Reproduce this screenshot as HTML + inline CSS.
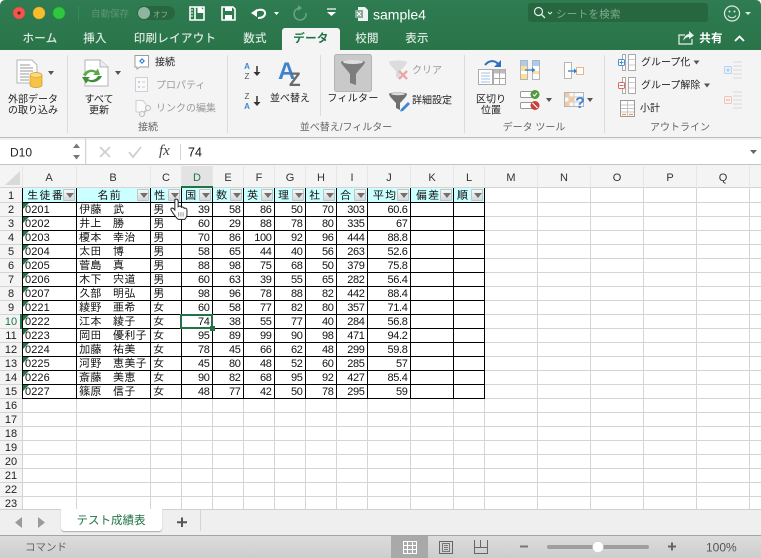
<!DOCTYPE html>
<html lang="ja"><head><meta charset="utf-8"><title>sample4</title>
<style>
html,body{margin:0;padding:0;background:#fff}
#w{position:relative;width:761px;height:558px;overflow:hidden;background:#fff;font-family:"Liberation Sans","Noto Sans CJK JP",sans-serif}
.a{position:absolute}
.t{position:absolute;white-space:nowrap;line-height:1;transform:translateY(calc(-50% + 1.5px));color:#222;font-size:10px}
.c{position:absolute;white-space:nowrap;line-height:1;transform:translate(-50%,calc(-50% + 1.5px));color:#222;font-size:10px}
.tab{color:#d9e8df;font-size:11.5px;font-weight:500;letter-spacing:.3px}
.g{color:#9a9a9a}
.lb{color:#666;font-size:10px}
table{position:absolute;left:22px;top:188px;border-collapse:separate;border-spacing:0;table-layout:fixed;width:463px;font-family:"IPAGothic","Noto Sans CJK JP",sans-serif;font-size:11.3px;color:#111}
td{box-sizing:border-box;height:14px;padding:1px 2px 0;border-right:1px solid #000;border-bottom:1px solid #000;line-height:12px;overflow:hidden;white-space:nowrap;background:#fff}
td.r{text-align:right;padding-right:2.5px;font-family:"Liberation Sans",sans-serif;font-size:11px;letter-spacing:-.35px}
tr td:first-child{border-left:1px solid #000}
tr.h td{height:15px;background:#ccffff;position:relative;padding:1px 0 0 3px;letter-spacing:1px}
tr.h td.m{text-align:center;padding-right:11px}
tr.h td:after{content:"";position:absolute;right:1px;top:1px;width:10px;height:10px;background:linear-gradient(#f6f6f6,#d8d8d8);border:1px solid #c4c4c4;border-radius:1px}
tr.h td:before{content:"";position:absolute;right:2.5px;top:5px;width:0;height:0;border-left:4px solid transparent;border-right:4px solid transparent;border-top:5px solid #707070;z-index:2}
td.f{position:relative;font-family:"Liberation Sans",sans-serif;font-size:11px;letter-spacing:.1px;padding-left:2px}
.f:before{content:"";position:absolute;left:0;top:0;width:0;height:0;border-top:6px solid #217346;border-right:6px solid transparent}
.rh{color:#222;font-size:11px;font-family:"Liberation Sans",sans-serif}
.ch{color:#333;font-size:11px;font-family:"Liberation Sans",sans-serif}
</style></head><body><div id="w">

<!-- title + tabs -->
<div class="a" style="left:0;top:0;width:761px;height:50px;background:linear-gradient(#2f7c52,#2a7449);border-radius:5px 5px 0 0"></div>
<!-- ribbon -->
<div class="a" style="left:0;top:50px;width:761px;height:87px;background:#f4f4f4"></div>
<div class="a" style="left:0;top:137px;width:761px;height:1px;background:#b9b9b9"></div>
<!-- active tab -->
<div class="a" style="left:282px;top:28px;width:58px;height:22px;background:#f4f4f4;border-radius:3px 3px 0 0"></div>
<!-- search -->
<div class="a" style="left:528px;top:3px;width:180px;height:19px;background:#27673f;border-radius:3px"></div>
<!-- toggle -->
<div class="a" style="left:137px;top:6px;width:38px;height:14px;background:#28663f;border-radius:7px"></div>

<span class="t" style="left:91px;top:13px;color:#5d9576;font-size:9.5px">自動保存</span>
<span class="t" style="left:153px;top:13px;color:#88b49c;font-size:7.5px">オフ</span>
<span class="t" style="left:373px;top:12.5px;color:#fff;font-size:14px">sample4</span>
<span class="t" style="left:556px;top:13px;color:#7dab91;font-size:10.5px;letter-spacing:.3px">シートを検索</span>

<span class="c tab" style="left:40px;top:38px">ホーム</span>
<span class="c tab" style="left:95px;top:38px">挿入</span>
<span class="c tab" style="left:175px;top:38px">印刷レイアウト</span>
<span class="c tab" style="left:255px;top:38px">数式</span>
<span class="c tab" style="left:311px;top:38px;color:#217346;font-weight:700">データ</span>
<span class="c tab" style="left:367px;top:38px">校閲</span>
<span class="c tab" style="left:417px;top:38px">表示</span>
<span class="c tab" style="left:711px;top:38px;color:#fff;font-weight:700">共有</span>

<!-- ribbon text -->
<span class="c" style="left:33px;top:99px">外部データ</span>
<span class="c" style="left:33px;top:110px">の取り込み</span>
<span class="c" style="left:99px;top:99px">すべて</span>
<span class="c" style="left:99px;top:110px">更新</span>
<span class="t" style="left:155px;top:62px">接続</span>
<span class="t g" style="left:156px;top:85px">プロパティ</span>
<span class="t g" style="left:156px;top:108px">リンクの編集</span>
<span class="c lb" style="left:148px;top:127px">接続</span>
<span class="c" style="left:290px;top:98px">並べ替え</span>
<span class="c" style="left:353px;top:98px;letter-spacing:.3px">フィルター</span>
<span class="t g" style="left:412px;top:70px">クリア</span>
<span class="t" style="left:412px;top:100px">詳細設定</span>
<span class="c lb" style="left:346px;top:127px">並べ替え/フィルター</span>
<span class="c" style="left:491px;top:99px">区切り</span>
<span class="c" style="left:491px;top:110px">位置</span>
<span class="c lb" style="left:534px;top:127px">データ ツール</span>
<span class="t" style="left:641px;top:62px">グループ化</span>
<span class="t" style="left:641px;top:85px">グループ解除</span>
<span class="t" style="left:640px;top:108px">小計</span>
<span class="c lb" style="left:680px;top:127px">アウトライン</span>

<!-- formula bar -->
<div class="a" style="left:0;top:138px;width:761px;height:26px;background:#f1f1f1"></div>
<div class="a" style="left:0;top:140px;width:85px;height:24px;background:#fff"></div>
<div class="a" style="left:87px;top:140px;width:674px;height:24px;background:#fff"></div>
<div class="a" style="left:0;top:164px;width:761px;height:1px;background:#c4c4c4"></div>
<span class="t" style="left:10px;top:151px;font-size:12px;color:#222">D10</span>
<span class="t" style="left:188px;top:151px;font-size:12.5px;color:#111">74</span>
<span class="t" style="left:159px;top:150px;font-size:15px;color:#444;font-family:'Liberation Serif',serif;font-style:italic">fx</span>

<!-- column header -->
<div class="a" style="left:0;top:165px;width:761px;height:23px;background:#f4f4f4"></div>
<div class="a" style="left:181px;top:166px;width:31px;height:22px;background:#e3e3e3"></div>
<div class="a" style="left:0;top:188px;width:22px;height:322px;background:#f4f4f4"></div>

<svg class="a" style="left:0;top:0" width="761" height="558" viewBox="0 0 761 558">
<!-- grid -->
<g stroke="#d4d4d4" stroke-width="1" shape-rendering="crispEdges">
<path d="M22.5 188V510M76.5 188V510M150.5 188V510M181.5 188V510M212.5 188V510M243.5 188V510M274.5 188V510M305.5 188V510M336.5 188V510M367.5 188V510M410.5 188V510M453.5 188V510M484.5 188V510M537.5 188V510M590.5 188V510M643.5 188V510M696.5 188V510M749.5 188V510"/>
<path d="M0 202.500H761M0 216.500H761M0 230.500H761M0 244.500H761M0 258.500H761M0 272.500H761M0 286.500H761M0 300.500H761M0 314.500H761M0 328.500H761M0 342.500H761M0 356.500H761M0 370.500H761M0 384.500H761M0 398.500H761M0 412.500H761M0 426.500H761M0 440.500H761M0 454.500H761M0 468.500H761M0 482.500H761M0 496.500H761"/>
<path d="M0 187.500H761"/>
</g>
<path d="M22.5 166V188M76.5 166V188M150.5 166V188M181.5 166V188M212.500 166V188M243.500 166V188M274.500 166V188M305.500 166V188M336.500 166V188M367.500 166V188M410.500 166V188M453.500 166V188M484.500 166V188M537.500 166V188M590.500 166V188M643.500 166V188M696.500 166V188M749.500 166V188" stroke="#e6e6e6" shape-rendering="crispEdges"/>
<path d="M5 185L20 171V185Z" fill="#d9d9d9"/>
</svg>
<div class="a" style="left:181px;top:186px;width:32px;height:2px;background:#217346"></div>
<div class="a" style="left:20px;top:314px;width:2px;height:15px;background:#217346"></div>

<!-- column letters -->
<span class="c ch" style="left:49px;top:177px">A</span>
<span class="c ch" style="left:113px;top:177px">B</span>
<span class="c ch" style="left:166px;top:177px">C</span>
<span class="c ch" style="left:197px;top:177px;color:#217346">D</span>
<span class="c ch" style="left:228px;top:177px">E</span>
<span class="c ch" style="left:259px;top:177px">F</span>
<span class="c ch" style="left:290px;top:177px">G</span>
<span class="c ch" style="left:321px;top:177px">H</span>
<span class="c ch" style="left:352px;top:177px">I</span>
<span class="c ch" style="left:389px;top:177px">J</span>
<span class="c ch" style="left:432px;top:177px">K</span>
<span class="c ch" style="left:469px;top:177px">L</span>
<span class="c ch" style="left:511px;top:177px">M</span>
<span class="c ch" style="left:564px;top:177px">N</span>
<span class="c ch" style="left:617px;top:177px">O</span>
<span class="c ch" style="left:670px;top:177px">P</span>
<span class="c ch" style="left:723px;top:177px">Q</span>

<!-- row numbers -->
<span class="c rh" style="left:11px;top:195px">1</span>
<span class="c rh" style="left:11px;top:209px">2</span>
<span class="c rh" style="left:11px;top:223px">3</span>
<span class="c rh" style="left:11px;top:237px">4</span>
<span class="c rh" style="left:11px;top:251px">5</span>
<span class="c rh" style="left:11px;top:265px">6</span>
<span class="c rh" style="left:11px;top:279px">7</span>
<span class="c rh" style="left:11px;top:293px">8</span>
<span class="c rh" style="left:11px;top:307px">9</span>
<span class="c rh" style="left:11px;top:321px;color:#217346">10</span>
<span class="c rh" style="left:11px;top:335px">11</span>
<span class="c rh" style="left:11px;top:349px">12</span>
<span class="c rh" style="left:11px;top:363px">13</span>
<span class="c rh" style="left:11px;top:377px">14</span>
<span class="c rh" style="left:11px;top:391px">15</span>
<span class="c rh" style="left:11px;top:405px">16</span>
<span class="c rh" style="left:11px;top:419px">17</span>
<span class="c rh" style="left:11px;top:433px">18</span>
<span class="c rh" style="left:11px;top:447px">19</span>
<span class="c rh" style="left:11px;top:461px">20</span>
<span class="c rh" style="left:11px;top:475px">21</span>
<span class="c rh" style="left:11px;top:489px">22</span>
<span class="c rh" style="left:11px;top:503px">23</span>

<table>
<colgroup><col style="width:55px"><col style="width:74px"><col style="width:31px"><col style="width:31px"><col style="width:31px"><col style="width:31px"><col style="width:31px"><col style="width:31px"><col style="width:31px"><col style="width:43px"><col style="width:43px"><col style="width:31px"></colgroup>
<tr class="h"><td class="m">生徒番</td><td class="m">名前</td><td>性</td><td>国</td><td>数</td><td>英</td><td>理</td><td>社</td><td>合</td><td class="m">平均</td><td class="m">偏差</td><td>順</td></tr>
<tr><td class="f">0201</td><td>伊藤&nbsp; 武</td><td>男</td><td class="r">39</td><td class="r">58</td><td class="r">86</td><td class="r">50</td><td class="r">70</td><td class="r">303</td><td class="r">60.6</td><td></td><td></td></tr>
<tr><td class="f">0202</td><td>井上&nbsp; 勝</td><td>男</td><td class="r">60</td><td class="r">29</td><td class="r">88</td><td class="r">78</td><td class="r">80</td><td class="r">335</td><td class="r">67</td><td></td><td></td></tr>
<tr><td class="f">0203</td><td>榎本&nbsp; 幸治</td><td>男</td><td class="r">70</td><td class="r">86</td><td class="r">100</td><td class="r">92</td><td class="r">96</td><td class="r">444</td><td class="r">88.8</td><td></td><td></td></tr>
<tr><td class="f">0204</td><td>太田&nbsp; 博</td><td>男</td><td class="r">58</td><td class="r">65</td><td class="r">44</td><td class="r">40</td><td class="r">56</td><td class="r">263</td><td class="r">52.6</td><td></td><td></td></tr>
<tr><td class="f">0205</td><td>菅島&nbsp; 真</td><td>男</td><td class="r">88</td><td class="r">98</td><td class="r">75</td><td class="r">68</td><td class="r">50</td><td class="r">379</td><td class="r">75.8</td><td></td><td></td></tr>
<tr><td class="f">0206</td><td>木下&nbsp; 宍道</td><td>男</td><td class="r">60</td><td class="r">63</td><td class="r">39</td><td class="r">55</td><td class="r">65</td><td class="r">282</td><td class="r">56.4</td><td></td><td></td></tr>
<tr><td class="f">0207</td><td>久部&nbsp; 明弘</td><td>男</td><td class="r">98</td><td class="r">96</td><td class="r">78</td><td class="r">88</td><td class="r">82</td><td class="r">442</td><td class="r">88.4</td><td></td><td></td></tr>
<tr><td class="f">0221</td><td>綾野&nbsp; 亜希</td><td>女</td><td class="r">60</td><td class="r">58</td><td class="r">77</td><td class="r">82</td><td class="r">80</td><td class="r">357</td><td class="r">71.4</td><td></td><td></td></tr>
<tr><td class="f">0222</td><td>江本&nbsp; 綾子</td><td>女</td><td class="r">74</td><td class="r">38</td><td class="r">55</td><td class="r">77</td><td class="r">40</td><td class="r">284</td><td class="r">56.8</td><td></td><td></td></tr>
<tr><td class="f">0223</td><td>岡田&nbsp; 優利子</td><td>女</td><td class="r">95</td><td class="r">89</td><td class="r">99</td><td class="r">90</td><td class="r">98</td><td class="r">471</td><td class="r">94.2</td><td></td><td></td></tr>
<tr><td class="f">0224</td><td>加藤&nbsp; 祐美</td><td>女</td><td class="r">78</td><td class="r">45</td><td class="r">66</td><td class="r">62</td><td class="r">48</td><td class="r">299</td><td class="r">59.8</td><td></td><td></td></tr>
<tr><td class="f">0225</td><td>河野&nbsp; 恵美子</td><td>女</td><td class="r">45</td><td class="r">80</td><td class="r">48</td><td class="r">52</td><td class="r">60</td><td class="r">285</td><td class="r">57</td><td></td><td></td></tr>
<tr><td class="f">0226</td><td>斎藤&nbsp; 美恵</td><td>女</td><td class="r">90</td><td class="r">82</td><td class="r">68</td><td class="r">95</td><td class="r">92</td><td class="r">427</td><td class="r">85.4</td><td></td><td></td></tr>
<tr><td class="f">0227</td><td>篠原&nbsp; 信子</td><td>女</td><td class="r">48</td><td class="r">77</td><td class="r">42</td><td class="r">50</td><td class="r">78</td><td class="r">295</td><td class="r">59</td><td></td><td></td></tr>
</table>

<!-- selection -->
<div class="a" style="left:180px;top:314px;width:29px;height:11px;border:2px solid #217346"></div>
<div class="a" style="left:210px;top:326px;width:5px;height:5px;background:#217346"></div>

<!-- sheet tabs -->
<div class="a" style="left:0;top:509px;width:761px;height:1px;background:#cfcfcf"></div>
<div class="a" style="left:0;top:510px;width:761px;height:25px;background:#efefef"></div>
<div class="a" style="left:61px;top:509px;width:101px;height:22px;background:#fff;border-radius:0 0 3px 3px;box-shadow:0 1px 1px #aaa"></div>
<span class="c" style="left:111px;top:520px;color:#217346;font-size:11.5px">テスト成績表</span>
<div class="a" style="left:200px;top:510px;width:1px;height:21px;background:#d4d4d4"></div>

<!-- status -->
<div class="a" style="left:0;top:535px;width:761px;height:23px;background:linear-gradient(#dcdcdc,#cdcdcd);border-top:1px solid #a5a5a5;box-sizing:border-box"></div>
<div class="a" style="left:391px;top:536px;width:37px;height:22px;background:#a9a9a9"></div>
<span class="t" style="left:25px;top:546px;color:#666;font-size:10.5px">コマンド</span>
<span class="t" style="left:706px;top:546px;color:#555;font-size:12px">100%</span>

<!-- icons -->
<svg class="a" style="left:0;top:0" width="761" height="558" viewBox="0 0 761 558">
<!-- traffic lights -->
<circle cx="19" cy="13" r="6" fill="#f0564f" stroke="#d5403a" stroke-width=".5"/><circle cx="19" cy="13" r="1.6" fill="#7e1712"/>
<circle cx="39" cy="13" r="6" fill="#f8bc2e" stroke="#d99e1f" stroke-width=".5"/>
<circle cx="59" cy="13" r="6" fill="#2fc740" stroke="#20a830" stroke-width=".5"/>
<path d="M78.5 6V21" stroke="#3b8560"/>
<circle cx="144" cy="13" r="6" fill="#8fb5a1"/>
<!-- sidebar -->
<g fill="none" stroke="#fff" stroke-width="1.6"><path d="M190 7H204V20H190ZM195 7V20"/></g>
<path d="M197.5 7h3l3 3v3h-6z" fill="#fff"/><path d="M191 10h2M191 13h2M191 16h2" stroke="#fff"/>
<!-- save -->
<path d="M222 7H233L235 9V20H222Z" fill="none" stroke="#fff" stroke-width="1.6"/><path d="M225 7h7v4h-7zM225 15h7v5h-7z" fill="#fff"/>
<!-- undo -->
<path d="M254 13C258 8 266 9 265 14C264 18 260 18 258 18" fill="none" stroke="#fff" stroke-width="2"/><path d="M251 13L257 9V17Z" fill="#fff"/>
<path d="M274 12h5l-2.500 3z" fill="#fff"/>
<!-- redo -->
<path d="M300 8A6 6 0 1 0 306 13" fill="none" stroke="#69a186" stroke-width="1.600"/><path d="M298 5L302 8L298 11Z" fill="#69a186"/>
<!-- customize -->
<path d="M327 9h9" stroke="#fff" stroke-width="1.200"/><path d="M327 12h9l-4.500 4z" fill="#fff"/>
<!-- file -->
<path d="M358 7h7l3 3v11h-10z" fill="#eef4f0"/><rect x="355" y="10" width="8" height="8" fill="#84ab95"/><path d="M357 12l4 4M361 12l-4 4" stroke="#fff"/>
<!-- search -->
<circle cx="538.500" cy="11.500" r="4" fill="none" stroke="#e5efe9" stroke-width="1.200"/><path d="M541.500 14.500L545 18" stroke="#e5efe9" stroke-width="1.300"/><path d="M548 12l2 2 2-2" fill="none" stroke="#e5efe9"/>
<!-- smiley -->
<circle cx="732" cy="13.500" r="7.500" fill="none" stroke="#dcebe3" stroke-width="1.200"/><circle cx="729.500" cy="11.500" r="1" fill="#dcebe3"/><circle cx="734.500" cy="11.500" r="1" fill="#dcebe3"/><path d="M728 15.500C730 18.500 734 18.500 736 15.500" fill="none" stroke="#dcebe3"/>
<path d="M745 12h6l-3 3z" fill="#dcebe3"/>
<!-- share -->
<path d="M685 35H679V44H692V39" fill="none" stroke="#e8f1ec" stroke-width="1.200"/><path d="M683 41C684 36 687 34 689 34V31L694 35.500L689 39V37C687 37 685 38 683 41Z" fill="#e8f1ec"/>
<path d="M735 41L739.500 36.500L744 41" fill="none" stroke="#fff" stroke-width="1.800"/>

<!-- separators -->
<g stroke="#dcdcdc" shape-rendering="crispEdges"><path d="M67.500 55V133M227.500 55V133M320.500 55V116M464.500 55V133M604.500 55V133"/></g>

<!-- external data -->
<path d="M17 60H32L37 65V83H17Z" fill="#fff" stroke="#b5b5b5"/><path d="M20 65h10M20 68h13M20 71h13M20 74h9M20 77h9M20 80h9" stroke="#9a9a9a"/>
<path d="M30 75a6 2.500 0 0 1 12 0V85a6 2.500 0 0 1-12 0Z" fill="#f6c445" stroke="#c99a2a" stroke-width=".7"/><ellipse cx="36" cy="75" rx="6" ry="2.300" fill="#fbdc83" stroke="#c99a2a" stroke-width=".5"/>
<path d="M48 71h6l-3 4z" fill="#555"/>
<!-- refresh -->
<path d="M85 60H100L108 67V86H85Z" fill="#fff" stroke="#b5b5b5"/><path d="M100 60V67H108" fill="#eee" stroke="#b5b5b5"/>
<path d="M83 75C85 70 92 68 96 71L98 68.500L100 75H93L95 73C92 71 88 72 86 76Z" fill="#5ba945"/><path d="M102 76C100 81 93 84 88 81L86 83.500L82 77H90L88 79C91 81 96 80 98 76Z" fill="#3e8e36"/>
<path d="M115 71h6l-3 4z" fill="#555"/>
<!-- conn -->
<path d="M135 55.500H148.500V67H140L137 69V67H135Z" fill="#fff" stroke="#9d9d9d"/><path d="M142 58l3 3-3 3-3-3z" fill="#3e87d8"/><circle cx="142" cy="61" r="1" fill="#fff"/>
<rect x="135.500" y="77.500" width="12" height="14" fill="#f9f9f9" stroke="#d0d0d0"/><path d="M138 82h2M138 87h2" stroke="#a9c5e4" stroke-width="1.500"/><path d="M142 82h3M142 87h3" stroke="#ccc"/>
<path d="M136 100.500H143L146 104V112H136Z" fill="#fafafa" stroke="#cfcfcf"/><circle cx="142" cy="114" r="2.500" fill="#f4f4f4" stroke="#bbb"/><circle cx="148" cy="108" r="2.500" fill="#f4f4f4" stroke="#bbb"/><path d="M143.500 112.500L146.500 109.500" stroke="#bbb"/>
<!-- sort small -->
<text x="247" y="69" font-size="8" font-family="Liberation Sans" fill="#3e87d8" font-weight="700" text-anchor="middle">A</text><text x="247" y="79" font-size="8" font-family="Liberation Sans" fill="#555" text-anchor="middle">Z</text>
<path d="M257 66V74" stroke="#333" stroke-width="1.500"/><path d="M253.500 72h7l-3.500 4z" fill="#333"/>
<text x="247" y="99" font-size="8" font-family="Liberation Sans" fill="#555" text-anchor="middle">Z</text><text x="247" y="109" font-size="8" font-family="Liberation Sans" fill="#3e87d8" font-weight="700" text-anchor="middle">A</text>
<path d="M257 96V104" stroke="#333" stroke-width="1.500"/><path d="M253.500 102h7l-3.500 4z" fill="#333"/>
<!-- big AZ -->
<text x="278" y="79" font-size="24" font-family="Liberation Sans" font-weight="700" fill="#3d83cf">A</text>
<text x="289" y="86" font-size="19" font-family="Liberation Sans" font-weight="700" fill="#6a6a6a">Z</text>
<!-- filter btn -->
<rect x="334.500" y="54.500" width="37" height="37" rx="2" fill="#c9c9c9" stroke="#b5b5b5"/>
<path d="M341 62C341 60 365 60 365 62C365 64 358 71 356 74V85L350 83V74C348 71 341 64 341 62Z" fill="#7d7d7d"/><ellipse cx="353" cy="62" rx="10" ry="2" fill="#dedede"/>
<!-- clear -->
<path d="M389 62C389 60 407 60 407 62C407 64 402 69 400 71V79L396 77V71C394 69 389 64 389 62Z" fill="#dcdcdc"/><path d="M399 71L407 79M407 71L399 79" stroke="#e8a9a5" stroke-width="2.400"/>
<!-- advanced -->
<path d="M389 94C389 92 407 92 407 94C407 96 402 101 400 103V110L396 108V103C394 101 389 96 389 94Z" fill="#707070"/><ellipse cx="398" cy="94" rx="7" ry="1.300" fill="#ddd"/><path d="M401 109L408 102L410 104L403 111L400 111.500Z" fill="#3e87d8"/>
<!-- text to columns -->
<path d="M485 65C489 60 495 60 498 64" fill="none" stroke="#2f6fb8" stroke-width="2"/><path d="M501 60V67H494Z" fill="#2f6fb8"/>
<rect x="478.500" y="69.500" width="14" height="15" fill="#fff" stroke="#aaa"/><path d="M481 73h9M481 76h9M481 79h9M481 82h9" stroke="#9dc0e6"/>
<rect x="493.500" y="69.500" width="12" height="15" fill="#fff" stroke="#aaa"/><path d="M494 69.500h11v4h-11z" fill="#bbb"/><path d="M499.500 70V84M494 78.500H505" stroke="#aaa"/>
<!-- flash fill -->
<g stroke="#b5b5b5"><rect x="520.500" y="60.500" width="7" height="19" fill="#fff"/><rect x="532.500" y="60.500" width="7" height="19" fill="#fff"/></g>
<path d="M521 61h6v5h-6zM533 61h6v5h-6z" fill="#a9cdf0"/><path d="M521 66h6v5h-6zM521 74h6v5h-6zM533 74h6v-3h-6z" fill="#fbdf9a"/><path d="M525 70H533" stroke="#2f7fd0" stroke-width="1.300"/><path d="M532 67.500l3.500 2.500-3.500 2.500z" fill="#2f7fd0"/>
<!-- consolidate -->
<rect x="564.500" y="62.500" width="7" height="16" fill="#fff" stroke="#b5b5b5"/><rect x="576.500" y="67.500" width="7" height="7" fill="#fff" stroke="#eeb388"/><path d="M568 71H575" stroke="#2f7fd0" stroke-width="1.300"/><path d="M574 68.500l3 2.500-3 2.500z" fill="#2f7fd0"/>
<!-- validate -->
<rect x="520.500" y="91.500" width="17" height="6" rx="1" fill="#fff" stroke="#999"/><rect x="520.500" y="102.500" width="17" height="6" rx="1" fill="#fff" stroke="#999"/>
<circle cx="535" cy="94.500" r="4.500" fill="#4f9b3a"/><path d="M533 94.500l1.500 1.500 2.500-3" fill="none" stroke="#fff"/><circle cx="535" cy="105.500" r="4.500" fill="#c9403a"/><path d="M532.500 103l5 5" stroke="#fff" stroke-width="1.200"/>
<path d="M546 98h6l-3 4z" fill="#555"/>
<!-- what-if -->
<rect x="564.500" y="92.500" width="19" height="14" fill="#f9f9f9" stroke="#b5b5b5"/><path d="M569 93V106M574 93V106M565 97H583M565 102H583" stroke="#ccc"/><path d="M565 93h4v4h-4zM569 97h5v5h-5zM565 102h4v4h-4z" fill="#f7c9a0"/>
<text x="580" y="108" font-size="16" font-weight="700" font-family="Liberation Sans" fill="#3e87d8" text-anchor="middle">?</text>
<path d="M587 98h6l-3 4z" fill="#555"/>
<!-- group -->
<g fill="#fff" stroke="#aaa"><rect x="622.500" y="54.500" width="3" height="16"/><rect x="628.500" y="54.500" width="7" height="16"/><rect x="622.500" y="77.500" width="3" height="16"/><rect x="628.500" y="77.500" width="7" height="16"/></g>
<path d="M629 59.500h6M629 65h6M629 82.500h6M629 88h6" stroke="#ccc"/>
<rect x="618.500" y="59.500" width="6" height="6" rx="1" fill="#fff" stroke="#4a90d9"/><path d="M619.500 62.500h4M621.500 60.500v4" stroke="#4a90d9"/>
<rect x="618.500" y="82.500" width="6" height="6" rx="1" fill="#fff" stroke="#dd6b63"/><path d="M619.500 85.500h4" stroke="#dd6b63"/>
<path d="M693.500 60.500h6l-3 4zM704 83.500h6l-3 4z" fill="#555"/>
<!-- subtotal -->
<rect x="620.500" y="100.500" width="14" height="16" fill="#fff" stroke="#999"/><path d="M627.500 101V116M621 105H634M621 108.500H634M621 112H634" stroke="#c5c5c5"/><path d="M622 114.500h4M629 114.500h4" stroke="#ef9d4a" stroke-width="1.300"/>
<!-- faded right -->
<rect x="724.500" y="66.500" width="7" height="7" rx="1" fill="#edf3fa" stroke="#b8d3ee"/><path d="M726 70h4M728 68v4" stroke="#a5c7ea"/><path d="M733 62h9M733 66h9M733 70h9M733 74h9M733 78h9" stroke="#d9d9d9"/>
<rect x="724.500" y="96.500" width="7" height="7" rx="1" fill="#fbf0ee" stroke="#eec3bc"/><path d="M726 100h4" stroke="#e8aaa2"/><path d="M733 92h9M733 96h9M733 100h9M733 104h9M733 108h9" stroke="#d9d9d9"/>

<!-- formula bar controls -->
<path d="M73 148l3.500-4.500 3.500 4.500zM73 155h7l-3.500 4.500z" fill="#777"/>
<path d="M85.500 138V164" stroke="#d5d5d5"/>
<path d="M100 147l10 10M110 147l-10 10" stroke="#cfcfcf" stroke-width="1.800"/>
<path d="M129 152l4 5 8-10" fill="none" stroke="#cfcfcf" stroke-width="1.800"/>
<path d="M180.500 144V160" stroke="#d5d5d5"/>
<path d="M750 150h7l-3.500 4z" fill="#666"/>

<!-- hand cursor -->
<g transform="translate(171 199) scale(1.1) translate(-170.500 -198)">
<path d="M174 198.500C175.500 197.500 177 198.500 177 200V205C178 204 180 204.500 180 205.500C181 205 182.500 205.500 182.500 206.500C183.500 206 185 206.500 185 208V212C185 214 184 215.500 183 216.500H177C175 215 174 213 172.500 211L170.500 208C170 206.500 171.500 205.500 173 207L174 208Z" fill="#fff" stroke="#222" stroke-width=".9"/>
<path d="M177.500 210v4M179.500 210v4M181.500 210v4" stroke="#888" stroke-width=".8"/>
</g>

<!-- sheet nav -->
<path d="M22 517V528L15 522.500Z" fill="#9a9a9a"/><path d="M38 517V528L45 522.500Z" fill="#9a9a9a"/>
<path d="M182 517.500V527M177 522.300H187" stroke="#555" stroke-width="2"/>

<!-- status icons -->
<g stroke="#fff" fill="none" shape-rendering="crispEdges"><path d="M403.500 541.500H416.500V553.500H403.500ZM403.500 545.500H416.500M403.500 549.500H416.500M407.500 541.500V553.500M412.500 541.500V553.500"/></g>
<rect x="439.500" y="541.500" width="13" height="12" fill="none" stroke="#666"/><rect x="442.500" y="543.500" width="7" height="8" fill="none" stroke="#777"/><path d="M444 545.500h4M444 547.500h4M444 549.500h4" stroke="#777"/>
<path d="M474.500 540V553.500H487.500V540M474.500 547.500H487.500M480.500 540V547.500" fill="none" stroke="#666" shape-rendering="crispEdges"/>
<path d="M520 546.500H528" stroke="#777" stroke-width="2"/>
<path d="M549 547H647" stroke="#9e9e9e" stroke-width="4" stroke-linecap="round"/>
<circle cx="598" cy="547" r="5.500" fill="#fff" stroke="#ccc" stroke-width=".5"/>
<path d="M668 546.500H676M672 542.500V550.500" stroke="#666" stroke-width="2"/>
</svg>
</div></body></html>
